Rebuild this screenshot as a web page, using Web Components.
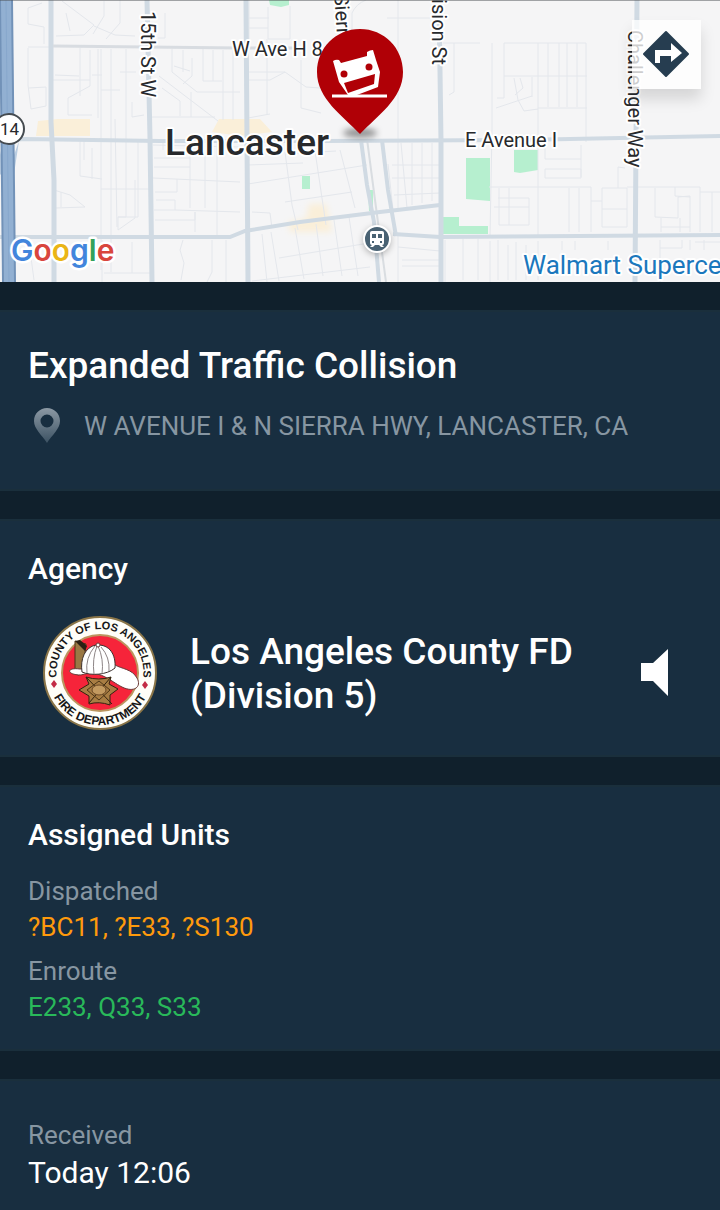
<!DOCTYPE html>
<html lang="en">
<head>
<meta charset="utf-8">
<meta name="viewport" content="width=device-width, initial-scale=1">
<title>Incident details</title>
<style>
  body {
    margin: 0;
    min-height: 100vh;
    background: #10202c;
    color: #fff;
    font-family: Roboto, sans-serif;
  }
</style>
</head>
<body>
<incident-page>
  <incident-map slot="map"></incident-map>
  <incident-card>
    <incident-title address="W AVENUE I &amp; N SIERRA HWY, LANCASTER, CA">Expanded Traffic Collision</incident-title>
  </incident-card>
  <incident-card heading="Agency">
    <agency-row>
      <agency-seal slot="seal"></agency-seal>
      Los Angeles County FD (Division 5)
    </agency-row>
  </incident-card>
  <incident-card heading="Assigned Units">
    <info-field label="Dispatched" kind="dispatched">?BC11, ?E33, ?S130</info-field>
    <info-field label="Enroute" kind="enroute">E233, Q33, S33</info-field>
  </incident-card>
  <incident-card>
    <info-field label="Received" kind="time">Today 12:06</info-field>
  </incident-card>
</incident-page>

<script>
class IncidentPage extends HTMLElement {
  constructor() {
    super();
    this.attachShadow({ mode: "open" });
  }

  connectedCallback() {
    this.shadowRoot.innerHTML = /* html */`
    <style>
      :host {
        display: block;
      }

      main {
        display: flex;
        flex-direction: column;
        gap: 28px;
      }
    </style>
    <main>
      <slot name="map"></slot>
      <slot></slot>
    </main>
    `;
  }
}

class IncidentCard extends HTMLElement {
  constructor() {
    super();
    this.attachShadow({ mode: "open" });
  }

  static get styles() {
    return /* css */`
      :host {
        display: block;
        padding: 32px 28px 26px;
        background: #182e40;
        box-shadow: inset 0 2px #1a2f3c, inset 0 -2px #1a2f3c;
      }

      h2 {
        margin: 0 0 16px;
        font-size: 30px;
        font-weight: 500;
        line-height: 36px;
      }
    `;
  }

  connectedCallback() {
    const heading = this.getAttribute("heading");
    this.shadowRoot.innerHTML = /* html */`
    <style>${IncidentCard.styles}</style>
    <section>
      ${heading ? `<h2>${heading}</h2>` : ""}
      <slot></slot>
    </section>
    `;
  }
}

class IncidentTitle extends HTMLElement {
  constructor() {
    super();
    this.attachShadow({ mode: "open" });
  }

  static get styles() {
    return /* css */`
      :host {
        display: block;
        padding-bottom: 19px;
      }

      h1 {
        margin: 0 0 16px;
        font-size: 37px;
        font-weight: 500;
        line-height: 48px;
      }

      .address {
        display: flex;
        align-items: center;
        gap: 20px;
        color: #8796a2;
        font-size: 26px;
        line-height: 40px;
      }

      svg {
        flex: none;
        width: 36px;
        height: 36px;
      }
    `;
  }

  connectedCallback() {
    this.shadowRoot.innerHTML = /* html */`
    <style>${IncidentTitle.styles}</style>
    <h1><slot></slot></h1>
    <div class="address">
      <svg viewBox="0 0 36 36" aria-hidden="true">
        <defs>
          <linearGradient id="fade" x1="0" y1="0" x2="0" y2="1">
            <stop offset="0" stop-color="#8c99a4"/>
            <stop offset="1" stop-color="#3c5263"/>
          </linearGradient>
        </defs>
        <path fill="url(#fade)" fill-rule="evenodd" d="M19 0C12 0 6 5.500 6 13C6 21 14 27 19 35C24 27 32 21 32 13C32 5.500 26 0 19 0ZM19 6.500A6.500 6.500 0 1 1 19 19.500A6.500 6.500 0 1 1 19 6.500Z"/>
      </svg>
      <span></span>
    </div>
    `;
    this.shadowRoot.querySelector("span").textContent = this.getAttribute("address");
  }
}

class AgencyRow extends HTMLElement {
  constructor() {
    super();
    this.attachShadow({ mode: "open" });
  }

  static get styles() {
    return /* css */`
      :host {
        display: flex;
        align-items: center;
        gap: 32px;
        padding: 12px 14px 0;
      }

      .name {
        flex: 1;
        padding-top: 2px;
        font-size: 37px;
        font-weight: 500;
        line-height: 44px;
      }

      button {
        flex: none;
        width: 48px;
        height: 56px;
        padding: 0;
        border: 0;
        background: none;
        color: #fff;
      }

      svg {
        display: block;
        width: 48px;
        height: 56px;
      }
    `;
  }

  connectedCallback() {
    this.shadowRoot.innerHTML = /* html */`
    <style>${AgencyRow.styles}</style>
    <slot name="seal"></slot>
    <div class="name"><slot></slot></div>
    <button type="button" aria-label="Play audio">
      <svg viewBox="0 0 48 56" aria-hidden="true">
        <path fill="currentColor" d="M11 18H23L38 4V51L23 36H11Z"/>
      </svg>
    </button>
    `;
  }
}

class AgencySeal extends HTMLElement {
  constructor() {
    super();
    this.attachShadow({ mode: "open" });
  }

  connectedCallback() {
    this.shadowRoot.innerHTML = /* html */`
    <style>
      :host {
        display: block;
        flex: none;
        width: 116px;
        height: 116px;
      }

      svg {
        display: block;
        width: 100%;
        height: 100%;
      }

      text {
        fill: #171717;
        font: 700 11px "Liberation Sans", sans-serif;
      }

      .bottom {
        font-size: 12px;
      }
    </style>
    <svg viewBox="0 0 116 116">
      <defs>
        <path id="top" d="M17 72A43.500 43.500 0 1 1 99 72"/>
        <path id="bottom" d="M6 58A52 52 0 0 0 110 58"/>
      </defs>
      <circle cx="58" cy="58" r="56" fill="#fffef8" stroke="#8a7548" stroke-width="2"/>
      <circle cx="58" cy="58" r="38" fill="#f6243a" stroke="#bb955f" stroke-width="2"/>
      <text text-anchor="middle"><textPath href="#top" startOffset="50%">COUNTY OF LOS ANGELES</textPath></text>
      <text class="bottom" text-anchor="middle"><textPath href="#bottom" startOffset="50%">FIRE DEPARTMENT</textPath></text>
      <path fill="#c32c45" d="M12 65L15 69L12 73L9 69ZM103 66L106 70L103 74L100 70Z"/>
      <path fill="#9a7844" stroke="#4a3518" d="M33 26L44 29L41 55L37 60L33 59Z"/>
      <path fill="#2b2014" d="M33 26L38 25L45 31L43 36Z"/>
      <path fill="#fff" stroke="#6a3937" d="M38 54C24 52 24 60 39 60C58 54 68 66 80 72C92 78 100 72 95 63C90 54 80 54 73 50Z"/>
      <path fill="#fff" stroke="#3c302e" d="M40 57C38 44 43 32 54 30C68 29 74 40 73 53C65 60 49 61 40 57Z"/>
      <path fill="none" stroke="#8d8586" d="M45 58Q43 43 53 31M52 59Q50 44 55 31M60 59Q62 44 56 31M67 56Q68 42 59 32"/>
      <circle cx="56" cy="30" r="2" fill="#fff" stroke="#6a3937"/>
      <path fill="#a87d43" stroke="#33230f" d="M44 62Q57 66 69 62L67 69L76 74L68 80L68 90Q57 86 47 89L47 81L37 75L47 69Z"/>
      <path stroke="#33230f" d="M44 62L70 89M69 62L47 88"/>
      <path fill="none" stroke="#4d3617" d="M57 66L68 75L57 85L45 75Z"/>
      <ellipse cx="57" cy="75" rx="7" ry="5" fill="#c39a60" stroke="#6b4825"/>
    </svg>
    `;
  }
}

class InfoField extends HTMLElement {
  constructor() {
    super();
    this.attachShadow({ mode: "open" });
  }

  static get styles() {
    return /* css */`
      :host {
        display: block;
        padding-top: 4px;
        font-size: 26px;
        line-height: 36px;
      }

      :host([kind="enroute"]) {
        padding-top: 8px;
      }

      :host([kind="time"]) {
        padding-top: 6px;
      }

      dl,
      dd {
        margin: 0;
      }

      dt {
        color: #8796a2;
      }

      :host([kind="dispatched"]) dd {
        color: #ff9a0c;
      }

      :host([kind="enroute"]) dd {
        color: #29b95a;
      }

      :host([kind="time"]) dd {
        font-size: 30px;
        line-height: 40px;
      }
    `;
  }

  connectedCallback() {
    this.shadowRoot.innerHTML = /* html */`
    <style>${InfoField.styles}</style>
    <dl>
      <dt>${this.getAttribute("label")}</dt>
      <dd><slot></slot></dd>
    </dl>
    `;
  }
}

class IncidentMap extends HTMLElement {
  constructor() {
    super();
    this.attachShadow({ mode: "open" });
  }

  static get styles() {
    return /* css */`
      :host {
        display: block;
        position: relative;
        height: 282px;
        overflow: hidden;
        background: #f5f5f6;
      }

      .map {
        display: block;
        width: 100%;
        height: 100%;
      }

      .minor {
        fill: none;
        stroke: #e4e7ec;
        stroke-width: 1;
      }

      .major {
        fill: none;
        stroke: #d0dae3;
        stroke-width: 5;
      }

      .label {
        fill: #27292c;
        font-size: 20px;
        stroke: #fff;
        stroke-width: 4px;
        stroke-linejoin: round;
        paint-order: stroke;
      }

      .city {
        font-size: 37px;
        font-weight: 500;
      }

      .store {
        fill: #1b78bd;
        font-size: 26px;
      }

      .logo {
        font: 600 30px Inter, sans-serif;
        stroke: #fff;
        stroke-width: 5px;
        stroke-linejoin: round;
        paint-order: stroke;
      }

      .directions {
        position: absolute;
        top: 20px;
        right: 19px;
        width: 69px;
        height: 69px;
        padding: 0;
        border: 0;
        background: #ffffffc4;
        box-shadow: 0 10px 14px #0002;
      }

      .directions svg {
        display: block;
        margin: 10px 11px 11px 10px;
      }
    `;
  }

  connectedCallback() {
    this.shadowRoot.innerHTML = /* html */`
    <style>${IncidentMap.styles}</style>
    <svg class="map" viewBox="0 0 720 282" preserveAspectRatio="xMidYMid slice">
      <defs>
        <filter id="soft" x="-50%" y="-50%" width="200%" height="200%">
          <feGaussianBlur stdDeviation="3"/>
        </filter>
      </defs>

      <!-- shops and parks -->
      <g fill="#faefd9">
        <path d="M38 121L58 119H90V136H36ZM219 119H260L272 132L240 136L212 132Z"/>
        <path filter="url(#soft)" d="M309 204H326L332 232H290L288 222L306 219Z"/>
      </g>
      <path fill="#b6efcf" d="M269 0H289V5L281 7L270 5ZM302 176H310V189H302ZM368 190H373V211H369ZM466 158H490V201L466 199ZM514 150H538V170L520 173L514 172ZM443 217H459V226H488V234H443Z"/>

      <!-- side streets -->
      <g class="minor">
        <path d="M28 8V24L44 27V44M28 8L42 3M53 80H90M28 48V85L31 109L46 106V87L29 88M28 47H50M90 50V86L68 98V115H92M66 13L70 31M62 1L94 25L84 35L56 36M104 1V16L93 34M120 0V23L106 39M94 26L115 35L135 36M158 38H165V13"/>
        <path d="M80 48V96M55 75L79 76M101 49V270M111 49V272M126 49V217H118V230L135 218V180M92 75H102M101 90H120M120 72H136M98 49V118M132 102V117L144 115M115 119L117 227M80 140V176L102 179M84 140V160M101 189H150M92 148V179M138 140V217H118"/>
        <path d="M54 190L70 195L85 207L56 208M61 192V207M153 145L240 147M153 178L240 182M154 158H190M154 167H190M155 192H177V179M156 200H175V210H154M175 210L240 212M155 220H195V212M163 140V150M190 140V208M205 140V208M217 140V235M195 212V232M228 140V152L240 153M152 117H215M159 76L218 121M172 49V72L197 92H240M183 50V72M192 58V76L183 84M203 49V81H222M213 50V81M223 50V120M233 50V120M174 66L190 71M162 88L180 101V116M191 92V117"/>
        <path d="M28 235L34 280M56 240V250M102 240V282M104 273H150M132 242V273M183 240L180 250L184 263L181 280M212 240V272L207 282M226 240V282M249 72H285L306 87L320 88M249 0V44M268 7V39H290V6M249 18H269M249 28H268M267 39V115M249 80H270L285 72M301 60V108L321 113M248 118L270 114M352 30V13Q356 4 366 0M398 0V212M387 18H440M443 43H480M454 43V92L449 95M492 43V130L490 236M504 43V98H497M538 43V236M504 43H586V142M548 43V107M559 43V107M567 43V107M577 43V107M504 76H587M538 108H587M496 108L532 96M514 78L518 100L524 111L538 109M520 78L523 88L515 95M532 77V97"/>
        <path d="M545 145V159H581V145M545 169H581V178H545V169M581 159V177M489 187H591V232M499 188V225H529V198H498M509 188V225M494 207H529M569 188V232M579 188V232M591 201H602V188H627V227H602V201M602 209H627M618 188V167L625 168M627 187H700V232M655 188V217L678 218V197L690 196V232M675 187V196L690 197M661 218V232M661 227H690M700 192H720M712 192V232M680 218V232M490 241V282M498 240V280M508 245V280M516 242V280M526 245V280M538 241V280M562 241V250M575 241V250M608 241V250M660 240V282M660 248H682V240M690 240V250M695 242H720M704 240V250"/>
        <path d="M248 184L367 165M285 152L292 205L298 230M252 212L270 213L272 228M271 232L279 281M315 151L326 225M340 150L355 208M285 202L352 192M262 234L267 282M279 258L369 243M285 154L336 151M295 228L304 279M316 224L323 276M334 220L342 276M349 217L358 276M252 281L370 267M392 165H440M392 178H440M394 195L440 193M388 164L393 210M401 143L407 208M412 143V205M422 143V203M432 143V201M248 165L303 163M398 236V282M398 247L440 251M402 260H440M402 266H440M445 240V282M463 239V280M478 239V280"/>
        <path stroke="#d9dde1" stroke-width="2" d="M367 139L375 200L386 282"/>
      </g>

      <!-- avenues and arterials -->
      <g class="major">
        <path d="M51 0V122L54 180V282M147 0L150 138L152 282M246 0L248 282M439 0L441 141V282M637 0L635 282"/>
        <path stroke-width="4" d="M0 141L25 139L160 141H325L520 140L720 136M0 237H230L245 231L300 222L380 212L440 205M393 234L440 237L720 235"/>
        <path stroke-width="4" d="M361 140L367 185L374 222L379 282M382 140L388 190L396 236"/>
        <path stroke="#d8dce1" stroke-width="3" d="M53 46L240 48H300"/>
      </g>

      <!-- freeway -->
      <path fill="#bacde1" d="M14 155L19 141L14 174ZM0 150L6 180L0 174Z"/>
      <path fill="none" stroke="#7292b8" stroke-width="14" d="M6 0L8 185L9 282"/>
      <path fill="none" stroke="#92b0d2" stroke-width="10" d="M6 0L8 185L9 282"/>
      <path fill="none" stroke="#87a7cc" stroke-width="1" d="M6 0L8 185L9 282"/>
      <circle cx="9" cy="129" r="15" fill="#fff" stroke="#454b50" stroke-width="2"/>
      <text x="0" y="135" font-size="17" fill="#27292c">14</text>

      <!-- street names -->
      <g class="label">
        <text x="232" y="56">W Ave H 8</text>
        <text x="465" y="147">E Avenue I</text>
        <text transform="translate(141 11) rotate(90)">15th St W</text>
        <text transform="translate(337 35) rotate(86)" text-anchor="end">Sierr</text>
        <text transform="translate(432 65) rotate(90)" text-anchor="end">ision St</text>
        <text transform="translate(628 30) rotate(90)">Challenger Way</text>
        <text class="city" x="165" y="155">Lancaster</text>
        <text class="store" x="523" y="274">Walmart Superce</text>
      </g>

      <!-- station -->
      <circle cx="377" cy="241" r="14" fill="#0004" filter="url(#soft)"/>
      <circle cx="377" cy="239" r="13" fill="#496273" stroke="#fff" stroke-width="2"/>
      <path fill="#fff" fill-rule="evenodd" d="M372 231H382Q384 231 384 233V243Q384 245 382 245L384 247H381L379 245H375L373 247H370L372 245Q370 245 370 243V233Q370 231 372 231ZM372 234V238H376V234ZM378 234V238H382V234ZM372 241V243H374V241ZM380 241V243H382V241Z"/>

      <text class="logo" x="11" y="261"><tspan fill="#4285dc">G</tspan><tspan fill="#d9463d">o</tspan><tspan fill="#eab516">o</tspan><tspan fill="#4285dc">g</tspan><tspan fill="#34a15a">l</tspan><tspan fill="#d9463d">e</tspan></text>

      <!-- incident pin, overturned car -->
      <ellipse cx="360" cy="133" rx="17" ry="5" fill="#0006" filter="url(#soft)"/>
      <path fill="#b00006" d="M360 29C336 29 317 48 317 72C317 99 343 116 360 134C377 116 403 99 403 72C403 48 384 29 360 29Z"/>
      <path fill="#fff" fill-rule="evenodd" d="M333 61Q336 59 339 60L341 63L367 56V52Q370 50 373 50L376 60L380 72L378 87L357 95H348L339 82ZM344 83L348 93L374 84L375 74Z"/>
      <circle cx="344" cy="74" r="3.500" fill="#b00006"/>
      <circle cx="369" cy="67" r="3.500" fill="#b00006"/>
      <path stroke="#fff" stroke-width="3" d="M332 96H387"/>
      <path stroke="#4d5054" stroke-width="1" d="M0 0H720"/>
    </svg>
    <button class="directions" type="button" aria-label="Directions">
      <svg width="48" height="48" viewBox="0 0 48 48" aria-hidden="true">
        <path fill="#263d50" stroke="#263d50" stroke-width="2" stroke-linejoin="round" d="M24 2L46 24L24 46L2 24Z"/>
        <path fill="#fff" d="M13 20H29V13L40 23L29 32V26H18V33H13Z"/>
      </svg>
    </button>
    `;
  }
}

customElements.define("incident-page", IncidentPage);
customElements.define("incident-card", IncidentCard);
customElements.define("incident-title", IncidentTitle);
customElements.define("agency-row", AgencyRow);
customElements.define("agency-seal", AgencySeal);
customElements.define("info-field", InfoField);
customElements.define("incident-map", IncidentMap);
</script>
</body>
</html>
